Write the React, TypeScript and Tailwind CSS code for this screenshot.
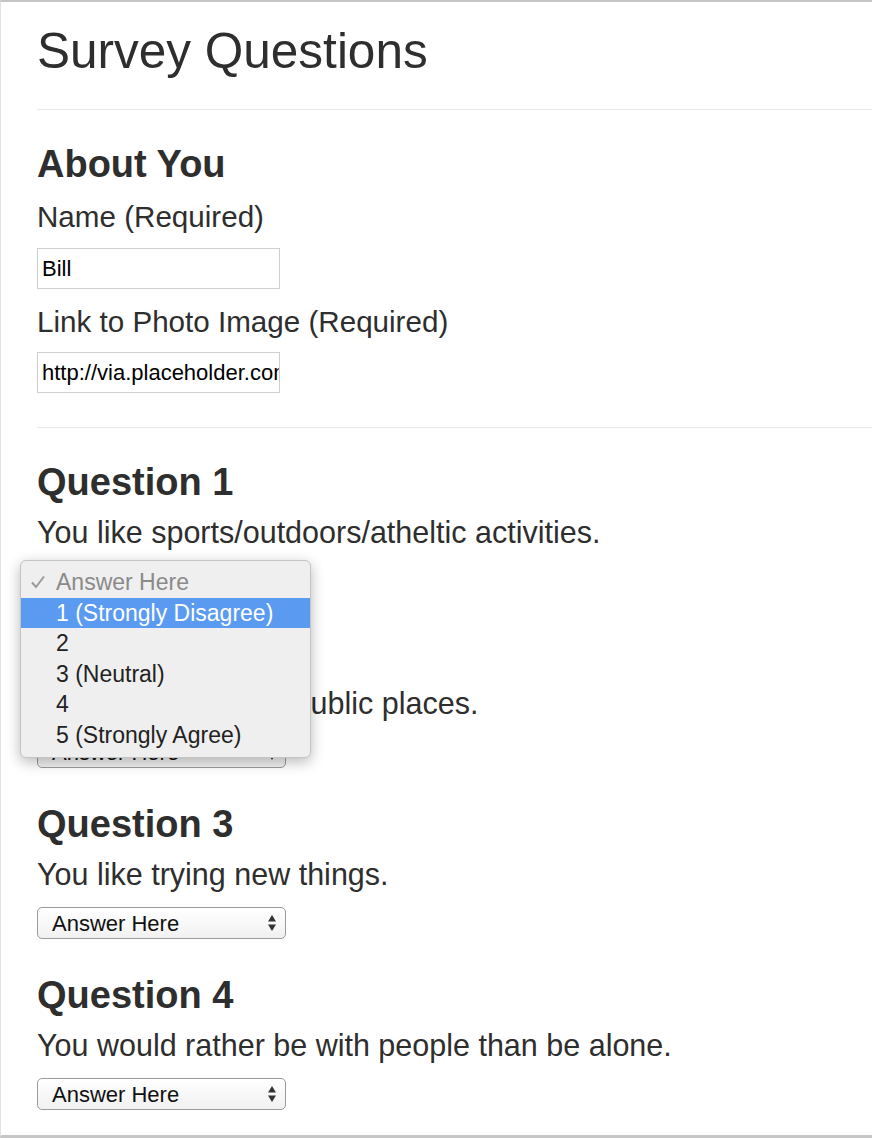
const questions = [
  { title: "Question 1", text: "You like sports/outdoors/atheltic activities." },
  { title: "Question 2", text: "You enjoy being in public places." },
  { title: "Question 3", text: "You like trying new things." },
  { title: "Question 4", text: "You would rather be with people than be alone." },
];

const options = ["1 (Strongly Disagree)", "2", "3 (Neutral)", "4", "5 (Strongly Agree)"];

function SelectBox() {
  return (
    <div className="mt-[15px] flex h-[32px] w-[249px] items-center justify-between rounded-[5px] border border-[#9b9b9b] bg-gradient-to-b from-white to-[#f1f1f1] pl-[14px] pr-[8px] text-[22px] text-[#111]">
      <span>Answer Here</span>
      <svg width="10" height="20" viewBox="0 0 10 20">
        <polygon points="1,8.5 9,8.5 5,2" fill="#333" />
        <polygon points="1,11.5 9,11.5 5,18" fill="#333" />
      </svg>
    </div>
  );
}

export default function App() {
  return (
    <div className="relative h-[1138px] overflow-hidden border-t-2 border-b-[3px] border-l border-t-[#c6c6c6] border-b-[#c6c6c6] border-l-[#e3e3e3] bg-white font-['Liberation_Sans',Arial,sans-serif] text-[#2e2e2e]">
      <div className="pl-9 pt-[19px]">
        <h1 className="text-[49.5px] leading-[60px]">Survey Questions</h1>
        <hr className="mt-[28px] border-t-[#e9e9e9]" />

        {/* About You */}
        <h2 className="mt-[32px] text-[38px] font-bold leading-[45px]">About You</h2>
        <label className="mt-3 block text-[29.6px] leading-[35px]">Name (Required)</label>
        <input
          readOnly
          value="Bill"
          className="mt-[14px] block h-[41px] w-[243px] border border-[#cfcfcf] pl-[4px] text-[22px] text-black outline-none"
        />
        <label className="mt-[15px] block text-[29.6px] leading-[35px]">Link to Photo Image (Required)</label>
        <input
          readOnly
          value="http://via.placeholder.com/150x150"
          className="mt-[13px] block h-[41px] w-[243px] border border-[#cfcfcf] pl-[4px] text-[22px] text-black outline-none"
        />
        <hr className="mt-[34px] mb-[32px] border-t-[#e9e9e9]" />

        <div className="flex flex-col gap-[34px]">
          {questions.map((q) => (
            <div key={q.title}>
              <h2 className="text-[38px] font-bold leading-[45px]">{q.title}</h2>
              <p className="mt-[10px] text-[30.5px] leading-[35px]">{q.text}</p>
              <SelectBox />
            </div>
          ))}
        </div>
      </div>

      {/* open dropdown of Question 1 */}
      <div className="absolute left-[19px] top-[558px] w-[291px] rounded-[6px] border border-[#c4c4c4] bg-[#efefef] pt-[6px] pb-[7px] text-[23px] shadow-[0_4px_14px_rgba(0,0,0,0.28)]">
        <div className="flex h-[30.5px] items-center pl-[9px] text-[#8a8a8a]">
          <span className="flex w-[26px]">
            <svg width="16" height="16" viewBox="0 0 16 16">
              <polyline points="2,8.5 6,13 14,2.5" fill="none" stroke="#9a9a9a" strokeWidth="2" />
            </svg>
          </span>
          Answer Here
        </div>
        {options.map((o, i) => (
          <div
            key={o}
            className={
              i === 0
                ? "flex h-[30.5px] items-center bg-[#5a9bf1] pl-[35px] text-white"
                : "flex h-[30.5px] items-center pl-[35px] text-[#222]"
            }
          >
            {o}
          </div>
        ))}
      </div>
    </div>
  );
}
